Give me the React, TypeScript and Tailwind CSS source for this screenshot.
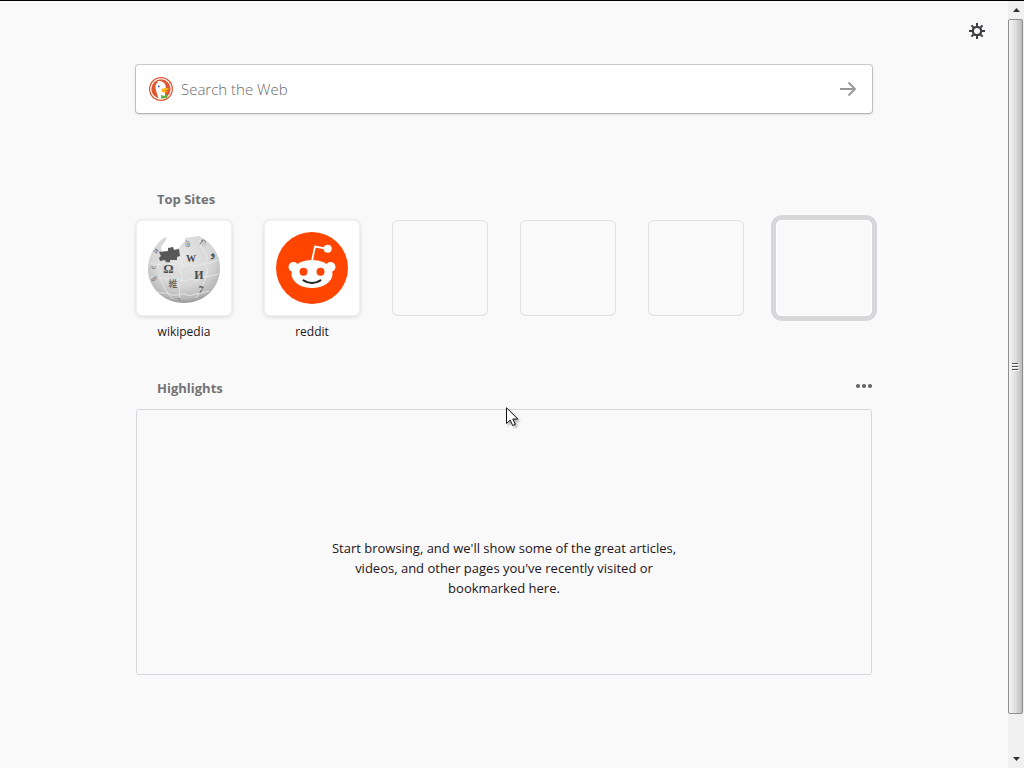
import { clsx } from "clsx";

const topSites = [
  { label: "wikipedia", icon: WikipediaIcon },
  { label: "reddit", icon: RedditIcon },
];

const placeholders = [
  { id: 3, focused: false },
  { id: 4, focused: false },
  { id: 5, focused: false },
  { id: 6, focused: true },
];

function WikipediaIcon() {
  return (
    <svg viewBox="0 0 72 72" className="size-[72px]" aria-hidden="true">
      <defs>
        <radialGradient id="globe" cx="0.48" cy="0.32" r="0.7">
          <stop offset="0" stopColor="#e6e6e6" />
          <stop offset="0.6" stopColor="#d6d6d6" />
          <stop offset="0.88" stopColor="#b8b8b8" />
          <stop offset="1" stopColor="#8c8c8c" />
        </radialGradient>
      </defs>
      <path
        d="M7 15l4-5 6-5 2 1-3 5-3 4 1 5 17-4 3-4 3-3 0-3 7-1 7-1 8 5c7 6 13 15 13 27 0 20-16 35-36 35S0 56 0 37C0 29 3 21 7 15z"
        fill="url(#globe)"
      />
      <path
        d="M11 20l9-1 0-3 5-1 1 3 5-1 1 7-3 1 0 3-7 0 0 2-4 1-1-3-5 1-1-3 2-2z"
        fill="#585858"
      />
      {/* jigsaw seams */}
      <path
        d="M11 29c-2 7-1 8 1 10s-2 4 0 6 1 5 4 10 6 9 9 12M33 26c0 5 2 5 2 8s-4 2-3 5 3 5 2 9-4 3-3 6 1 10 0 16M51 8c4 5 0 7 3 9s5 5 5 10-3 4-1 7 1 9-1 14-4 10-9 18M2 31c7 2 12 2 14 0 3-3 5 3 9 1 5 1 7-2 10 1s5-2 9 0 9-1 12-1 7-1 14-4M2 45c8 3 12 0 15 1s4 4 8 2 8 1 12 1 4-4 7-2 6 1 10-1 8-1 16-4M9 60c7 2 9 0 12 2s9 1 13 0 6 3 10 1 9-1 17-4"
        fill="none"
        stroke="#ededed"
        strokeWidth="0.8"
      />
      <g
        fill="#4a4a4a"
        textAnchor="middle"
        fontFamily="'Liberation Serif', 'DejaVu Serif', 'Noto Sans CJK JP', serif"
      >
        <text x="20.5" y="41" fontSize="13" fontWeight="700">Ω</text>
        <text x="43" y="30" fontSize="10" fontWeight="700">W</text>
        <text x="51" y="47" fontSize="12" fontWeight="700">И</text>
        <text x="25" y="55" fontSize="9">維</text>
        <text x="53" y="61" fontSize="10" fontWeight="700" transform="rotate(8 53 57)">7</text>
        <text x="64" y="25" fontSize="9" fontWeight="700" transform="rotate(-14 64 21)">و</text>
        <text x="56" y="14" fontSize="7" transform="rotate(35 56 10)">ि</text>
        <text x="39" y="15" fontSize="7">উ</text>
        <text x="5" y="36" fontSize="6">ய</text>
        <text x="8" y="21" fontSize="6" transform="rotate(-50 8 19)">И</text>
        <text x="6" y="49" fontSize="6" transform="rotate(60 6 47)">წ</text>
        <text x="30" y="69" fontSize="6" transform="rotate(15 30 69)">ን</text>
      </g>
    </svg>
  );
}

function RedditIcon() {
  return (
    <svg viewBox="0 0 72 72" className="size-[72px]" aria-hidden="true">
      <circle cx="36" cy="36" r="36" fill="#ff4500" />
      <circle cx="17.5" cy="35" r="5" fill="#fff" />
      <circle cx="54.5" cy="35" r="5" fill="#fff" />
      <ellipse cx="36" cy="42" rx="20.5" ry="14" fill="#fff" />
      <path d="M36 29l3-14.5 11 2.2" fill="none" stroke="#fff" strokeWidth="1.8" strokeLinejoin="round" />
      <circle cx="51.7" cy="16.8" r="4" fill="#fff" />
      <circle cx="27.5" cy="39.7" r="4" fill="#ff4500" />
      <circle cx="44.5" cy="39.7" r="4" fill="#ff4500" />
      <path d="M27.5 48.3q8.5 5.4 17 0" fill="none" stroke="#222" strokeWidth="2" strokeLinecap="round" />
    </svg>
  );
}

function DuckIcon() {
  return (
    <svg viewBox="0 0 24 24" className="size-6 shrink-0" aria-hidden="true">
      <circle cx="12" cy="12" r="12" fill="#de5833" />
      <circle cx="12" cy="12" r="10.2" fill="none" stroke="#fff" strokeWidth="1.1" />
      <path
        d="M9.4 21.4C8.5 17 6.500 13.500 6.500 9.800c0-2.400 1.200-4 3-4.500L7.900 4.300c2-.6 4.900-.2 6.300 1 1.700 1.200 2.600 2.900 2.600 5l-1 5.400.8 5a10 10 0 0 1-7.200.7z"
        fill="#fff"
      />
      <path d="M12.500 12.300c2-1.300 6-1.500 7.500-.8-.8 1.400-3 1.700-4.400 2.200 1 .5 2.900.4 3.400.8-1.500 1.400-5.500 1.400-6.500-.3z" fill="#fdb515" />
      <path d="M12 17.800l2.800 1.200 3.200-1.600.6 3-3.600.8-2.800.2z" fill="#5fb13f" />
      <circle cx="9.8" cy="9.4" r="0.9" fill="#2d4f8e" />
    </svg>
  );
}

function GearIcon() {
  return (
    <svg viewBox="0 0 16 16" className="size-4" fill="none" stroke="#3e3e40" strokeWidth="2" aria-hidden="true">
      <circle cx="8" cy="8" r="4.2" strokeWidth="2.3" />
      <path d="M8 0v3.500M8 12.500V16M0 8h3.500M12.500 8H16M2.400 2.400l2.400 2.400M11.200 11.200l2.400 2.400M2.400 13.600l2.400-2.400M11.200 4.800l2.400-2.400" />
    </svg>
  );
}

function SearchBox() {
  return (
    <form
      className="flex h-12 items-center rounded-[3px] bg-white pr-4 pl-[13px] shadow-[0_0_0_1px_rgba(0,0,0,0.17),0_1px_3px_rgba(0,0,0,0.2)]"
      onSubmit={(e) => e.preventDefault()}
    >
      <DuckIcon />
      <input
        type="text"
        aria-label="Search the Web"
        placeholder="Search the Web"
        className="ml-2 min-w-0 flex-1 bg-transparent text-[15px] font-light text-[#333] outline-none placeholder:text-[#6a6a6a]"
      />
      <button type="submit" aria-label="Search">
        <svg viewBox="0 0 16 16" className="size-4" fill="none" stroke="#989898" strokeWidth="1.8" aria-hidden="true">
          <path d="M0 8h15M8.500 1.500L15 8l-6.500 6.500" strokeLinejoin="round" />
        </svg>
      </button>
    </form>
  );
}

function TopSites() {
  return (
    <section className="mt-[76px]">
      <h2 className="pl-[21px] text-[13px] leading-5 font-bold text-[#737373]">Top Sites</h2>
      <ul className="mt-[11px] flex justify-between">
        {topSites.map(({ label, icon: Icon }) => (
          <li key={label}>
            <a href="#" className="block w-24 text-center">
              <span className="flex size-24 items-center justify-center rounded-md bg-white shadow-[inset_0_0_0_1px_rgba(0,0,0,0.06),0_1px_4px_rgba(12,12,13,0.14)]">
                <Icon />
              </span>
              <span className="mt-1.5 block text-[12px] leading-5">{label}</span>
            </a>
          </li>
        ))}
        {placeholders.map(({ id, focused }) => (
          <li key={id}>
            <a
              href="#"
              aria-label="Empty site"
              className={clsx(
                "block size-24 rounded-md",
                focused
                  ? "shadow-[inset_0_0_0_1px_#fff,0_0_0_5px_#d7d7d9]"
                  : "shadow-[inset_0_0_0_1px_#e0e0e2]"
              )}
            />
          </li>
        ))}
      </ul>
    </section>
  );
}

function Highlights() {
  return (
    <section className="mt-9">
      <div className="flex items-center justify-between">
        <h2 className="pl-[21px] text-[13px] leading-5 font-bold text-[#737373]">Highlights</h2>
        <button type="button" aria-label="Section menu" className="pb-1">
          <svg viewBox="0 0 16 4" className="h-1 w-4" fill="#606062" aria-hidden="true">
            <circle cx="2" cy="2" r="2" />
            <circle cx="8" cy="2" r="2" />
            <circle cx="14" cy="2" r="2" />
          </svg>
        </button>
      </div>
      <div className="mt-[11px] flex justify-center rounded-[3px] border border-[#d7d7db] pt-32 pb-[76px]">
        <p className="w-[346px] text-center text-[13px] leading-5">
          Start browsing, and we'll show some of the great articles, videos, and other pages you've
          recently visited or bookmarked here.
        </p>
      </div>
    </section>
  );
}

function ScrollBar() {
  return (
    <div className="flex w-4 shrink-0 flex-col bg-[#f0f0f0]">
      <button type="button" aria-label="Scroll up" className="flex h-[18px] items-center justify-center">
        <svg viewBox="0 0 7 4" className="h-1 w-[7px]" fill="#303030" aria-hidden="true">
          <path d="M0 4l3.500-4L7 4z" />
        </svg>
      </button>
      <div className="mr-px flex flex-1 items-center justify-center rounded-[2px] border border-[#8e8e8e] bg-linear-to-r from-[#f4f4f4] via-[#dedede] to-[#bcbcbc]">
        <svg viewBox="0 0 7 8" className="h-2 w-[7px]" aria-hidden="true">
          <path d="M0 0.500h6M0 3.500h6M0 6.500h6" stroke="#505050" />
          <path d="M1 1.500h6M1 4.500h6M1 7.500h6" stroke="#fff" />
        </svg>
      </div>
      <button type="button" aria-label="Scroll down" className="mt-9 flex h-[18px] items-center justify-center">
        <svg viewBox="0 0 7 4" className="h-1 w-[7px]" fill="#303030" aria-hidden="true">
          <path d="M0 0l3.500 4L7 0z" />
        </svg>
      </button>
    </div>
  );
}

function Pointer() {
  return (
    <svg
      viewBox="0 0 16 22"
      className="pointer-events-none absolute top-[406px] left-[506px] h-[22px] w-4 drop-shadow-[2px_2px_1px_rgba(0,0,0,0.3)]"
      aria-hidden="true"
    >
      <path d="M0.500 0.800v15.700l3.700-3.500 2.500 5.500 2.600-1.200-2.500-5.300h5z" fill="#fff" stroke="#111" />
    </svg>
  );
}

export default function App() {
  return (
    <div className="relative flex min-h-screen border-t border-black bg-[#f9f9fa] font-['Open_Sans','Noto_Sans',sans-serif] text-[#1d1420]">
      <div className="min-w-0 flex-1">
        <header className="flex justify-end pt-[22px] pr-[23px]">
          <button type="button" aria-label="Customize this page">
            <GearIcon />
          </button>
        </header>
        <main className="mx-auto mt-[26px] max-w-[736px]">
          <SearchBox />
          <TopSites />
          <Highlights />
        </main>
      </div>
      <ScrollBar />
      <Pointer />
    </div>
  );
}
